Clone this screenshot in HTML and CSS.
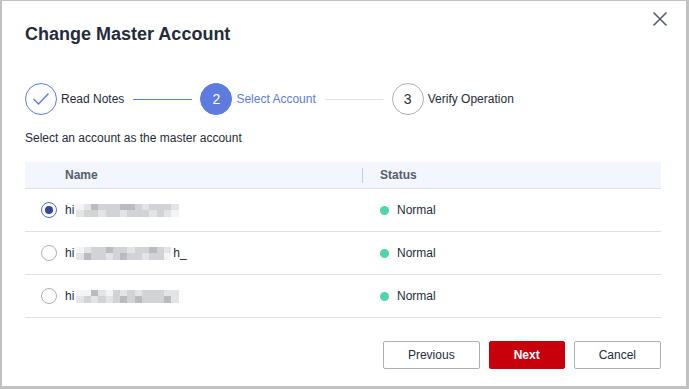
FILE: index.html
```html
<!DOCTYPE html>
<html lang="en">

<head>
    <meta charset="UTF-8">
    <meta name="viewport" content="width=device-width, initial-scale=1.0">
    <title>Change Master Account</title>
    <link rel="stylesheet" href="styles.css">
</head>

<body>
    <div class="dialog">
        <!-- Header -->
        <div class="dialog-header">
            <h1 class="title">Change Master Account</h1>
            <span class="close">
                <svg width="16" height="16" viewBox="0 0 16 16">
                    <path d="M1.5 1.5 L14.5 14.5 M14.5 1.5 L1.5 14.5" stroke="#575d6c" stroke-width="1.6" fill="none"/>
                </svg>
            </span>
        </div>

        <!-- Steps -->
        <div class="steps">
            <div class="step done">
                <span class="circle">
                    <svg width="18" height="14" viewBox="0 0 18 14">
                        <polyline points="1.5,7 6.5,12 16.5,1.5" stroke="#5e7ce0" stroke-width="1.4" fill="none"/>
                    </svg>
                </span>
                <span class="step-label">Read Notes</span>
            </div>
            <span class="line line-done"></span>
            <div class="step active">
                <span class="circle">2</span>
                <span class="step-label">Select Account</span>
            </div>
            <span class="line"></span>
            <div class="step">
                <span class="circle">3</span>
                <span class="step-label">Verify Operation</span>
            </div>
        </div>

        <p class="hint">Select an account as the master account</p>

        <!-- Accounts table -->
        <div class="table">
            <div class="row head">
                <div class="cell name-cell">Name</div>
                <div class="cell status-cell sep">Status</div>
            </div>
            <div class="row">
                <div class="cell name-cell">
                    <span class="radio checked"></span>
                    <span class="acct">hi</span>
                    <span class="mosaic">
                        <i class="s0"></i><i class="s1"></i><i class="s3"></i><i class="s2"></i><i class="s2"></i><i class="s2"></i><i class="s3"></i><i class="s3"></i><i class="s2"></i><i class="s1"></i><i class="s2"></i><i class="s2"></i><i class="s2"></i><i class="s1"></i>
                        <i class="s1"></i><i class="s2"></i><i class="s2"></i><i class="s1"></i><i class="s2"></i><i class="s2"></i><i class="s1"></i><i class="s2"></i><i class="s2"></i><i class="s2"></i><i class="s1"></i><i class="s2"></i><i class="s1"></i><i class="s0"></i>
                    </span>
                </div>
                <div class="cell status-cell"><span class="dot"></span>Normal</div>
            </div>
            <div class="row">
                <div class="cell name-cell">
                    <span class="radio"></span>
                    <span class="acct">hi</span>
                    <span class="mosaic short">
                        <i class="s0"></i><i class="s1"></i><i class="s2"></i><i class="s2"></i><i class="s3"></i><i class="s2"></i><i class="s2"></i><i class="s1"></i><i class="s2"></i><i class="s2"></i><i class="s3"></i><i class="s2"></i><i class="s1"></i>
                        <i class="s1"></i><i class="s3"></i><i class="s2"></i><i class="s2"></i><i class="s1"></i><i class="s2"></i><i class="s3"></i><i class="s2"></i><i class="s2"></i><i class="s1"></i><i class="s2"></i><i class="s2"></i><i class="s0"></i>
                    </span>
                    <span class="acct tail">h_</span>
                </div>
                <div class="cell status-cell"><span class="dot"></span>Normal</div>
            </div>
            <div class="row">
                <div class="cell name-cell">
                    <span class="radio"></span>
                    <span class="acct">hi</span>
                    <span class="mosaic">
                        <i class="s0"></i><i class="s0"></i><i class="s3"></i><i class="s1"></i><i class="s0"></i><i class="s2"></i><i class="s1"></i><i class="s2"></i><i class="s1"></i><i class="s2"></i><i class="s2"></i><i class="s2"></i><i class="s1"></i><i class="s1"></i>
                        <i class="s1"></i><i class="s2"></i><i class="s1"></i><i class="s2"></i><i class="s1"></i><i class="s2"></i><i class="s3"></i><i class="s2"></i><i class="s3"></i><i class="s2"></i><i class="s2"></i><i class="s2"></i><i class="s3"></i><i class="s1"></i>
                    </span>
                </div>
                <div class="cell status-cell"><span class="dot"></span>Normal</div>
            </div>
        </div>

        <!-- Footer -->
        <div class="footer">
            <button class="btn">Previous</button>
            <button class="btn btn-primary">Next</button>
            <button class="btn">Cancel</button>
        </div>
    </div>
</body>

</html>
```

FILE: styles.css
```css
* {
    box-sizing: border-box;
}

body {
    margin: 0;
    font-family: "Liberation Sans", Arial, sans-serif;
    font-size: 12px;
    color: #252b3a;
    background-color: #fff;
}

.dialog {
    width: 689px;
    height: 389px;
    border-style: solid;
    border-color: #c2c2c2;
    border-width: 1px 3px 3px 2px;
    padding: 10px 25px 0 23px;
    background-color: #fff;
}

/* Header */
.dialog-header {
    display: flex;
    justify-content: space-between;
    align-items: flex-start;
}

.title {
    margin: 11px 0 0;
    font-size: 18px;
    line-height: 24px;
    font-weight: bold;
    color: #252b3a;
}

.close {
    display: flex;
    margin-right: -7px;
}

/* Steps */
.steps {
    display: flex;
    align-items: center;
    margin-top: 37px;
}

.step {
    display: flex;
    align-items: center;
    gap: 4px;
}

.circle {
    width: 32px;
    height: 32px;
    border-radius: 50%;
    border: 1px solid #adb0b8;
    display: flex;
    align-items: center;
    justify-content: center;
    font-size: 14px;
    color: #252b3a;
}

.step.done .circle {
    border-color: #5e7ce0;
}

.step.active .circle {
    background-color: #5e7ce0;
    border-color: #5e7ce0;
    color: #fff;
}

.step.active .step-label {
    color: #5e7ce0;
}

.line {
    width: 58px;
    height: 1px;
    margin: 0 9px;
    background-color: #dfe1e6;
}

.line-done {
    width: 59px;
    margin: 0 8px 0 9px;
    background-color: #5e7ce0;
}

.hint {
    margin: 14px 0 15px;
    line-height: 18px;
}

/* Table */
.table {
    width: 636px;
}

.row {
    display: grid;
    grid-template-columns: 337px 1fr;
    height: 43px;
    border-bottom: 1px solid #dfe1e6;
}

.row.head {
    height: 27px;
    background-color: #f3f6fd;
    color: #575d6c;
    font-weight: bold;
}

.cell {
    display: flex;
    align-items: center;
}

.name-cell {
    padding-left: 40px;
}

.row:not(.head) .name-cell {
    padding-left: 16px;
}

.status-cell {
    padding-left: 18px;
}

.sep {
    position: relative;
}

.sep::before {
    content: "";
    position: absolute;
    left: 0;
    top: 6px;
    height: 15px;
    width: 1px;
    background-color: #c9ccd3;
}

.radio {
    width: 16px;
    height: 16px;
    border-radius: 50%;
    border: 1px solid #adb0b8;
    margin-right: 8px;
    display: flex;
    align-items: center;
    justify-content: center;
}

.radio.checked {
    border-color: #526ecc;
}

.radio.checked::after {
    content: "";
    width: 8px;
    height: 8px;
    border-radius: 50%;
    background-color: #344899;
}

.acct {
    color: #252b3a;
    font-size: 12px;
}

.acct.tail {
    margin-left: 2px;
}

.mosaic {
    display: grid;
    grid-template-columns: repeat(14, 7.3px);
    grid-auto-rows: 6.5px;
    margin-left: 2px;
}

.mosaic.short {
    grid-template-columns: repeat(13, 7.3px);
}

.mosaic i {
    display: block;
}

.s0 { background-color: #f4f4f5; }
.s1 { background-color: #e3e4e6; }
.s2 { background-color: #d2d3d6; }
.s3 { background-color: #babbc0; }

.dot {
    width: 9px;
    height: 9px;
    border-radius: 50%;
    background-color: #50d4ab;
    margin-right: 8px;
}

/* Footer */
.footer {
    display: flex;
    justify-content: flex-end;
    gap: 9px;
    margin-top: 23px;
}

.btn {
    height: 28px;
    padding: 0 24px;
    border: 1px solid #adb0b8;
    border-radius: 2px;
    background-color: #fff;
    color: #252b3a;
    font-family: "Liberation Sans", Arial, sans-serif;
    font-size: 12px;
}

.btn-primary {
    background-color: #c7000b;
    border-color: #c7000b;
    color: #fff;
    font-weight: bold;
}
```
